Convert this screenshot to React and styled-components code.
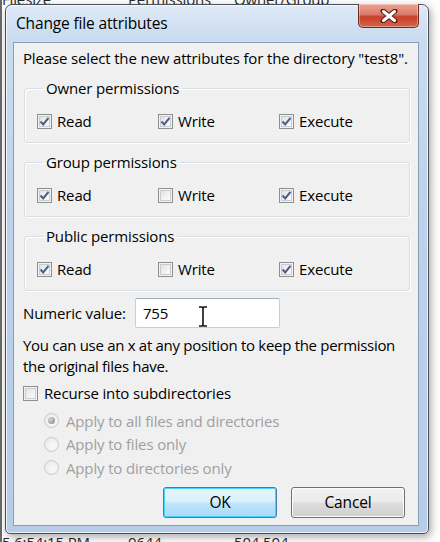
import React from "react"
import styled, { createGlobalStyle } from "styled-components"

const GlobalStyle = createGlobalStyle`
    html, body {
        margin: 0;
        padding: 0;
        background: #ffffff;
    }
    body {
        font-family: "Open Sans", "Noto Sans", sans-serif;
        font-size: 15px;
        letter-spacing: -0.15px;
        color: #000;
    }
`

const Page = styled.div`
    position: relative;
    width: 440px;
    height: 542px;
    overflow: hidden;
    background: #fff;
`

//file listing behind the dialog
const Listing = styled.div`
    display: flex;
    flex-direction: column;
    justify-content: space-between;
    height: 100%;
    border-left: 2px solid #6a6a6a;
    box-sizing: border-box;
`
const ListRow = styled.div`
    display: flex;
    height: 16px;
    line-height: 16px;
    font-size: 15px;
    color: #2a2a2a;
    margin: ${p => (p.top ? "-9px 0 0 0" : "0 0 -8px 0")};
`
const ListCell = styled.span`
    width: ${p => p.w}px;
    flex: none;
    white-space: nowrap;
`

//the dialog window
const Window = styled.div`
    position: absolute;
    left: 5px;
    top: 4px;
    width: 424px;
    height: 530px;
    box-sizing: border-box;
    display: flex;
    flex-direction: column;
    padding: 0 9px 7px 7px;
    border: 1px solid #4a4f57;
    border-radius: 7px 7px 5px 5px;
    background: linear-gradient(180deg, #dfeaf6 0%, #cadcf0 6%, #bcd2eb 40%, #b6cde8 100%);
    box-shadow: inset 0 0 0 1px rgba(255, 255, 255, 0.75), 2px 3px 8px rgba(0, 0, 0, 0.35);
`
const TitleBar = styled.div`
    display: flex;
    justify-content: space-between;
    height: 37px;
    flex: none;
`
const Title = styled.span`
    align-self: center;
    padding-left: 3px;
    margin-top: -2px;
    font-size: 15.5px;
    color: #000;
`
const CloseButton = styled.div`
    display: flex;
    align-items: center;
    justify-content: center;
    width: 61px;
    height: 24px;
    margin-top: -1px;
    box-sizing: border-box;
    border: 1px solid #6b2b22;
    border-top: none;
    border-radius: 0 0 5px 5px;
    background: linear-gradient(180deg, #eba596 0%, #dc7a68 45%, #c8402a 55%, #d5654a 100%);
    box-shadow: inset 0 0 0 1px rgba(255, 255, 255, 0.35);
`

const Client = styled.div`
    flex: 1;
    display: flex;
    flex-direction: column;
    background: #f0f0f0;
    border: 1px solid #8b9db4;
    padding: 5px 8px 0 9px;
`
const Text = styled.div`
    line-height: ${p => p.lh || 20}px;
    color: ${p => (p.disabled ? "#a0a0a0" : "#000")};
    white-space: nowrap;
`

const GroupBox = styled.fieldset`
    margin: ${p => (p.first ? "10px" : "9px")} 0 0 1px;
    padding: 13px 0 11px 12px;
    border: 1px solid #d5dfe5;
    border-radius: 3px;
    box-shadow: inset 1px 1px 0 #fff, 1px 1px 0 #fff;
    min-width: 0;
`
const Legend = styled.legend`
    margin-left: 6px;
    padding: 0 3px;
    line-height: 20px;
`
const CheckRow = styled.div`
    display: grid;
    grid-template-columns: 121px 121px 121px;
`
const CheckItem = styled.label`
    display: flex;
    align-items: center;
    gap: 5px;
    height: 20px;
`
const Box = styled.span`
    flex: none;
    display: flex;
    align-items: center;
    justify-content: center;
    width: 15px;
    height: 15px;
    box-sizing: border-box;
    border: 1px solid #8e8f8f;
    background: linear-gradient(135deg, #dcdcdc 0%, #f4f4f4 60%, #ffffff 100%);
    box-shadow: inset 0 0 0 1px #f2f2f2, inset 0 0 0 2px #c9ccd1;
`

const NumericRow = styled.div`
    display: flex;
    align-items: center;
    gap: 9px;
    margin-top: 7px;
`
const InputWrap = styled.div`
    position: relative;
    display: flex;
    align-items: center;
    width: 145px;
    height: 30px;
    box-sizing: border-box;
    padding-left: 7px;
    background: #fff;
    border: 1px solid #c6cfd9;
    border-top-color: #a5acb5;
    border-radius: 2px;
`
const Cursor = styled.svg`
    position: absolute;
    left: 62px;
    top: 7px;
`
const Help = styled.div`
    margin-top: 7px;
    line-height: 21px;
    white-space: nowrap;
    letter-spacing: -0.3px;
`
const RecurseRow = styled.div`
    display: flex;
    align-items: center;
    gap: 6px;
    height: 20px;
    margin-top: 6px;
`
const RadioList = styled.div`
    display: flex;
    flex-direction: column;
    padding-left: 21px;
    margin-top: 6px;
`
const RadioItem = styled.div`
    display: flex;
    align-items: center;
    gap: 7px;
    height: 23.5px;
`
const Radio = styled.span`
    flex: none;
    display: flex;
    align-items: center;
    justify-content: center;
    width: 15px;
    height: 15px;
    box-sizing: border-box;
    border-radius: 50%;
    border: 1px solid #c8c8c8;
    background: radial-gradient(circle at 60% 60%, #fafafa 0%, #ececec 70%, #e2e2e2 100%);
`
const Dot = styled.span`
    width: 7px;
    height: 7px;
    border-radius: 50%;
    background: radial-gradient(circle at 35% 35%, #d6d6d6 0%, #9a9a9a 70%, #8a8a8a 100%);
`

const ButtonRow = styled.div`
    display: flex;
    justify-content: flex-end;
    gap: 14px;
    margin-top: 7px;
    padding-right: 5px;
`
const Button = styled.div`
    display: flex;
    align-items: center;
    justify-content: center;
    width: 114px;
    height: 31px;
    box-sizing: border-box;
    border-radius: 3px;
    border: 1px solid ${p => (p.primary ? "#3c7fb1" : "#707070")};
    background: ${p =>
        p.primary
            ? "linear-gradient(180deg, #eaf6fd 0%, #d9f0fc 48%, #bee6fd 52%, #a7d9f5 100%)"
            : "linear-gradient(180deg, #f2f2f2 0%, #ebebeb 48%, #dddddd 52%, #cfcfcf 100%)"};
    box-shadow: inset 0 0 0 1px ${p => (p.primary ? "#48d3fb" : "#fcfcfc")};
    font-size: 15.5px;
`

const Check = ({on}) => (
    <Box>
        {on && (
            <svg width="11" height="11" viewBox="0 0 11 11">
                <path d="M1.5 5.5 L4.2 8.4 L9.5 1.8" fill="none" stroke="#4a5f86" strokeWidth="2" />
            </svg>
        )}
    </Box>
)

const perms = [
    {name: "Owner permissions", read: true, write: true, exec: true},
    {name: "Group permissions", read: true, write: false, exec: true},
    {name: "Public permissions", read: true, write: false, exec: true},
]

const radios = ["Apply to all files and directories", "Apply to files only", "Apply to directories only"]

const App = () => {
    return (
        <Page>
            <GlobalStyle />
            <Listing>
                <ListRow top>
                    <ListCell w={126}>Filesize</ListCell>
                    <ListCell w={106}>Permissions</ListCell>
                    <ListCell w={120}>Owner/Group</ListCell>
                </ListRow>
                <ListRow>
                    <ListCell w={126}>5 6:54:15 PM</ListCell>
                    <ListCell w={106}>0644</ListCell>
                    <ListCell w={120}>504 504</ListCell>
                </ListRow>
            </Listing>

            <Window>
                <TitleBar>
                    <Title>Change file attributes</Title>
                    <CloseButton>
                        <svg width="18" height="14" viewBox="0 0 18 14">
                            <path d="M3 2 L15 12 M15 2 L3 12" stroke="#5a1f18" strokeWidth="5" strokeLinecap="round" />
                            <path d="M3.5 2.5 L14.5 11.5 M14.5 2.5 L3.5 11.5" stroke="#ffffff" strokeWidth="3" strokeLinecap="round" />
                        </svg>
                    </CloseButton>
                </TitleBar>
                <Client>
                    <Text>Please select the new attributes for the directory "test8".</Text>
                    {perms.map((g, i) => (
                        <GroupBox key={g.name} first={i === 0}>
                            <Legend>{g.name}</Legend>
                            <CheckRow>
                                <CheckItem><Check on={g.read} />Read</CheckItem>
                                <CheckItem><Check on={g.write} />Write</CheckItem>
                                <CheckItem><Check on={g.exec} />Execute</CheckItem>
                            </CheckRow>
                        </GroupBox>
                    ))}
                    <NumericRow>
                        <Text>Numeric value:</Text>
                        <InputWrap>
                            755
                            <Cursor width="10" height="21" viewBox="0 0 10 21">
                                <path d="M1 1 H4 Q5 1 5 2.5 V18.5 Q5 20 4 20 H1 M9 1 H6 Q5 1 5 2.5 M5 18.5 Q5 20 6 20 H9" fill="none" stroke="#111" strokeWidth="1.6" />
                            </Cursor>
                        </InputWrap>
                    </NumericRow>
                    <Help>
                        You can use an x at any position to keep the permission<br />
                        the original files have.
                    </Help>
                    <RecurseRow>
                        <Check on={false} />
                        Recurse into subdirectories
                    </RecurseRow>
                    <RadioList>
                        {radios.map((r, i) => (
                            <RadioItem key={r}>
                                <Radio>{i === 0 && <Dot />}</Radio>
                                <Text disabled>{r}</Text>
                            </RadioItem>
                        ))}
                    </RadioList>
                    <ButtonRow>
                        <Button primary>OK</Button>
                        <Button>Cancel</Button>
                    </ButtonRow>
                </Client>
            </Window>
        </Page>
    )
}

export default App
